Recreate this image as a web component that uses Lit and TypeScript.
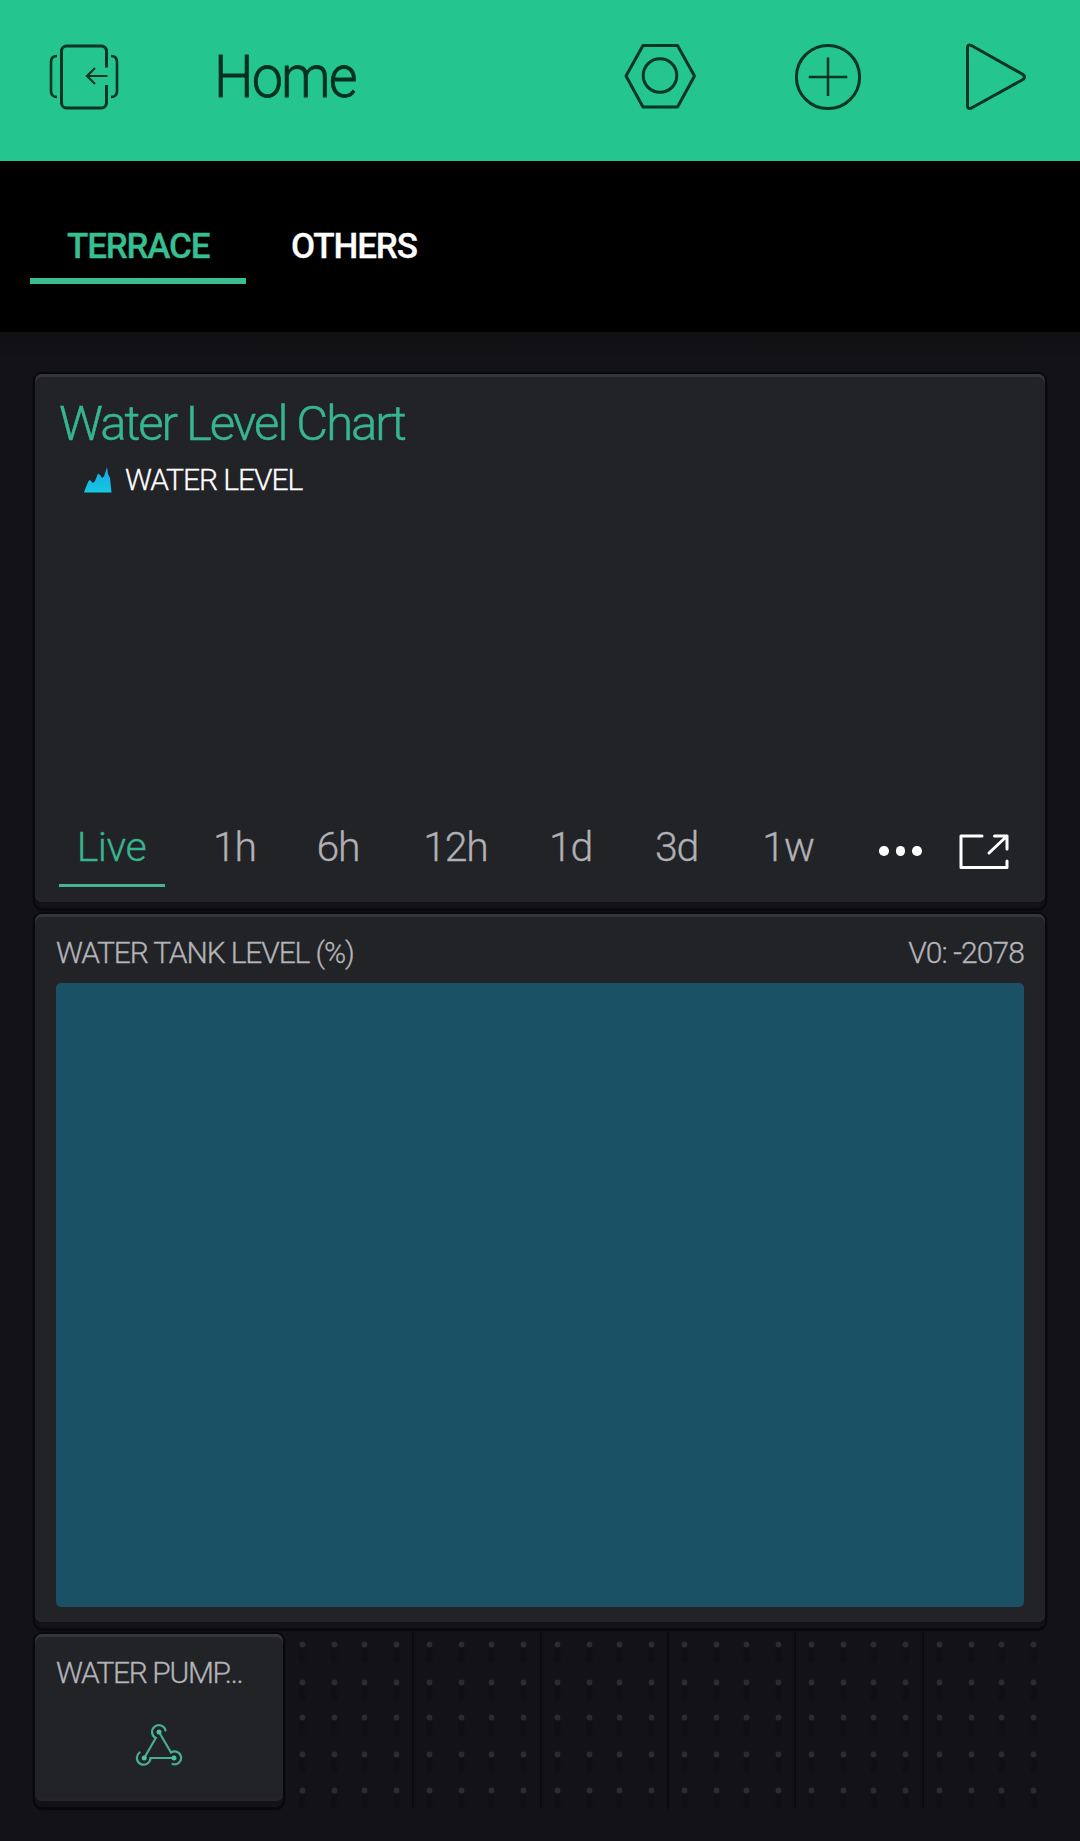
import { LitElement, html, css, svg } from "lit";
import { customElement, state } from "lit/decorators.js";
import { classMap } from "lit/directives/class-map.js";

const PAGES = ["TERRACE", "OTHERS"];
const RANGES = ["Live", "1h", "6h", "12h", "1d", "3d", "1w"];
const DOT_COLUMNS = [15.5, 47.5, 77.5, 109.5];
const DOT_ROWS = [12.5, 50.5, 85.5, 122.5, 158.5];

const exitIcon = html`<svg width="72" height="68" viewBox="48 43 72 68">
  <path d="M106.500 67.500V51a5 5 0 0 0-5-5H66.500a5 5 0 0 0-5 5v52a5 5 0 0 0 5 5h35a5 5 0 0 0 5-5V85" />
  <path d="M57 56q-6 0-6 6v29q0 6 6 6M111 56q6 0 6 6v29q0 6-6 6" stroke-width="2.600" />
  <path d="M107.500 76H87M95 68l-8 8 8 8" stroke-width="2.200" />
</svg>`;

const nutIcon = html`<svg width="74" height="68" viewBox="623 43 74 68">
  <path d="M643 45.500h34.500L694.500 76 677.500 107H643L626 76z" stroke-linejoin="round" />
  <circle cx="660" cy="75.500" r="16.800" />
</svg>`;

const plusIcon = html`<svg width="68" height="68" viewBox="794 43 68 68">
  <circle cx="828" cy="77" r="31.600" />
  <path d="M828 57.500v38.500M808.800 77h38.500" stroke-width="2.500" />
</svg>`;

const playIcon = html`<svg width="62" height="68" viewBox="965 43 62 68">
  <path d="M967.500 47.500q0-3.500 3.500-2.200L1023 74.500q3 2.500 0 5L971 108.200q-3.500 1.200-3.500-2.200z" stroke-linejoin="round" />
</svg>`;

const areaIcon = html`<svg width="28" height="26" viewBox="0 0 28 26">
  <defs>
    <linearGradient id="area" x1="0" y1="0" x2="0" y2="1">
      <stop offset="0" stop-color="#1aa6e6" />
      <stop offset="1" stop-color="#14c8e2" />
    </linearGradient>
  </defs>
  <path fill="url(#area)" d="M0 25.500 2 20l2.500-6 1.500-1 3 3 2-2 3-7.500 2 1.500 2 3 2-1.500L23 0l1 7 2 4 1.500 14.500z" />
</svg>`;

const expandIcon = html`<svg width="52" height="38" viewBox="0 0 52 38">
  <path d="M24 3H3v31.500h46V28M36.500 3H49v13M49 3 31 20" fill="none" stroke="#fff" stroke-width="3"
    stroke-linecap="round" stroke-linejoin="round" />
</svg>`;

const webhookIcon = html`<svg width="48" height="44" viewBox="135 1722 48 44">
  <g fill="none" stroke="#45b08c" stroke-width="2.200" stroke-linecap="round">
    <path d="M165.500 1730.500a6.800 6.800 0 1 0-9.700 7.500L144.200 1758" />
    <path d="M159 1732l12 20.500a6.500 6.500 0 1 1 1.500 11.500" />
    <path d="M139.500 1752.500a6.800 6.800 0 1 0 11 5.500H174" />
  </g>
  <g fill="#4fc09b">
    <circle cx="159" cy="1732" r="2.500" />
    <circle cx="144.200" cy="1758" r="2.500" />
    <circle cx="174" cy="1758" r="2.500" />
  </g>
</svg>`;

@customElement("grid-cell")
export class GridCell extends LitElement {
  static styles = css`
    :host {
      display: block;
      box-sizing: border-box;
      border-right: 2px solid #0c0c10;
      overflow: hidden;
    }
    :host(:last-of-type) {
      border-right-color: #111116;
    }
    svg {
      display: block;
    }
  `;

  render() {
    return html`<svg width="127" height="177">
      ${DOT_ROWS.map((y) =>
        DOT_COLUMNS.map(
          (x) => svg`<g><rect x=${x - 3} y=${y + 4} width="6" height="14" fill="#101014" /><circle cx=${x} cy=${y} r="2.900" fill="#2b2b30" /></g>`
        )
      )}
    </svg>`;
  }
}

@customElement("app-root")
export class AppRoot extends LitElement {
  static styles = css`
    :host {
      display: block;
      min-height: 1841px;
      background: #121217;
      font-family: Roboto, "Liberation Sans", sans-serif;
      font-weight: 300;
      -webkit-text-stroke-width: 0.3px;
    }
    .header {
      box-sizing: border-box;
      height: 161px;
      padding: 0 53px 7px 48px;
      display: flex;
      align-items: center;
      background: #25c58f;
      color: #04301f;
    }
    .header svg {
      display: block;
      fill: none;
      stroke: #063522;
      stroke-width: 3;
    }
    .title {
      margin-left: 94px;
      flex: 1;
      font-size: 60px;
      line-height: 70px;
      letter-spacing: -2px;
      transform: scaleX(0.93);
      transform-origin: left;
      -webkit-text-stroke-width: 0.8px;
    }
    .actions {
      display: flex;
      gap: 97px;
    }
    .actions .last {
      margin-left: 6px;
    }
    .tabs {
      box-sizing: border-box;
      height: 171px;
      padding: 63px 30px 0;
      display: flex;
      background: #000;
    }
    .tab {
      box-sizing: border-box;
      height: 60px;
      padding: 1px 37px 0;
      font-size: 35px;
      line-height: 44px;
      font-weight: 500;
      letter-spacing: -1.2px;
      color: #fff;
      border-bottom: 6px solid transparent;
    }
    .tab.active {
      width: 216px;
      color: #37be91;
      border-color: #37be91;
    }
    .tab:not(.active) {
      padding-left: 45px;
      letter-spacing: -1.1px;
    }
    .board {
      padding: 42px 29px 0 35px;
      display: flex;
      flex-direction: column;
      background: linear-gradient(#111113, #121217 30px);
    }
    .card {
      box-sizing: border-box;
      width: 1010px;
      border-radius: 7px;
      background: #222327;
      box-shadow: inset 0 3px 0 #35353a, inset 0 -3px 0 #252529, 0 6px 0 #131317, 0 7px 1px 2px #09090c,
        0 0 1px 2px #09090c;
    }
    .chart {
      height: 528px;
      padding: 21px 24px 0;
      display: flex;
      flex-direction: column;
    }
    .chart-title {
      font-size: 49px;
      line-height: 58px;
      letter-spacing: -2px;
      color: #37b68d;
      -webkit-text-stroke-width: 0.5px;
    }
    .legend {
      margin: 9px 0 0 25px;
      display: flex;
      align-items: center;
      gap: 13px;
      font-size: 30px;
      line-height: 36px;
      letter-spacing: -1.050px;
      color: #fff;
    }
    .plot {
      flex: 1;
    }
    .ranges {
      height: 65px;
      margin-bottom: 15px;
      display: grid;
      grid-template-columns: 124px 103px 104px 131px 99px 113px 110px 1fr;
      font-size: 41px;
      line-height: 50px;
      letter-spacing: -1.200px;
      color: #b0b0b5;
    }
    .range {
      box-sizing: border-box;
      height: 65px;
      text-align: center;
      border-bottom: 3px solid transparent;
    }
    .range.active {
      width: 106px;
      padding-right: 1px;
      letter-spacing: -0.500px;
      color: #37b68d;
      border-color: #45b591;
    }
    .tools {
      display: flex;
      justify-content: flex-end;
      gap: 35px;
      padding: 11px 11px 0 0;
    }
    .more {
      display: flex;
      gap: 7px;
      padding-top: 13px;
      height: 10px;
      margin-right: 1px;
    }
    .more i {
      width: 9.600px;
      height: 9.600px;
      border-radius: 50%;
      background: #fff;
    }
    .tank {
      height: 708px;
      margin-top: 12px;
      padding: 21px 21px 0;
    }
    .tank-head {
      display: flex;
      justify-content: space-between;
      height: 48px;
      font-size: 30px;
      line-height: 36px;
      color: #b4b4b8;
      letter-spacing: -0.9px;
    }
    .tank-name {
      letter-spacing: -1.120px;
    }
    .level {
      height: 624px;
      border-radius: 5px;
      background: #1a5165;
    }
    .bottom {
      display: flex;
      margin-top: 10px;
    }
    .pump {
      width: 248px;
      height: 167px;
      margin-top: 2px;
      padding: 21px 21px 0;
      font-size: 30px;
      line-height: 36px;
      letter-spacing: -1.350px;
      color: #b4b4b8;
    }
    .pump svg {
      display: block;
      margin: 31px 0 0 79px;
    }
    .cells {
      flex: 1;
      height: 177px;
      margin-left: 4px;
      display: grid;
      grid-template-columns: repeat(6, 1fr);
    }
  `;

  @state() private page = "TERRACE";
  @state() private range = "Live";

  render() {
    return html`
      <header class="header">
        ${exitIcon}
        <div class="title">Home</div>
        <div class="actions">${nutIcon}${plusIcon}<span class="last">${playIcon}</span></div>
      </header>
      <nav class="tabs">
        ${PAGES.map(
          (p) => html`<div class=${classMap({ tab: true, active: p === this.page })} @click=${() => (this.page = p)}>${p}</div>`
        )}
      </nav>
      <main class="board">
        <section class="card chart">
          <div class="chart-title">Water Level Chart</div>
          <div class="legend">${areaIcon}<span>WATER LEVEL</span></div>
          <div class="plot"></div>
          <div class="ranges">
            ${RANGES.map(
              (r) => html`<div class=${classMap({ range: true, active: r === this.range })} @click=${() => (this.range = r)}>${r}</div>`
            )}
            <div class="tools">
              <div class="more"><i></i><i></i><i></i></div>
              ${expandIcon}
            </div>
          </div>
        </section>
        <section class="card tank">
          <div class="tank-head"><span class="tank-name">WATER TANK LEVEL (%)</span><span>V0: -2078</span></div>
          <div class="level"></div>
        </section>
        <div class="bottom">
          <section class="card pump">WATER PUMP...${webhookIcon}</section>
          <div class="cells">${[0, 1, 2, 3, 4, 5].map(() => html`<grid-cell></grid-cell>`)}</div>
        </div>
      </main>
    `;
  }
}
